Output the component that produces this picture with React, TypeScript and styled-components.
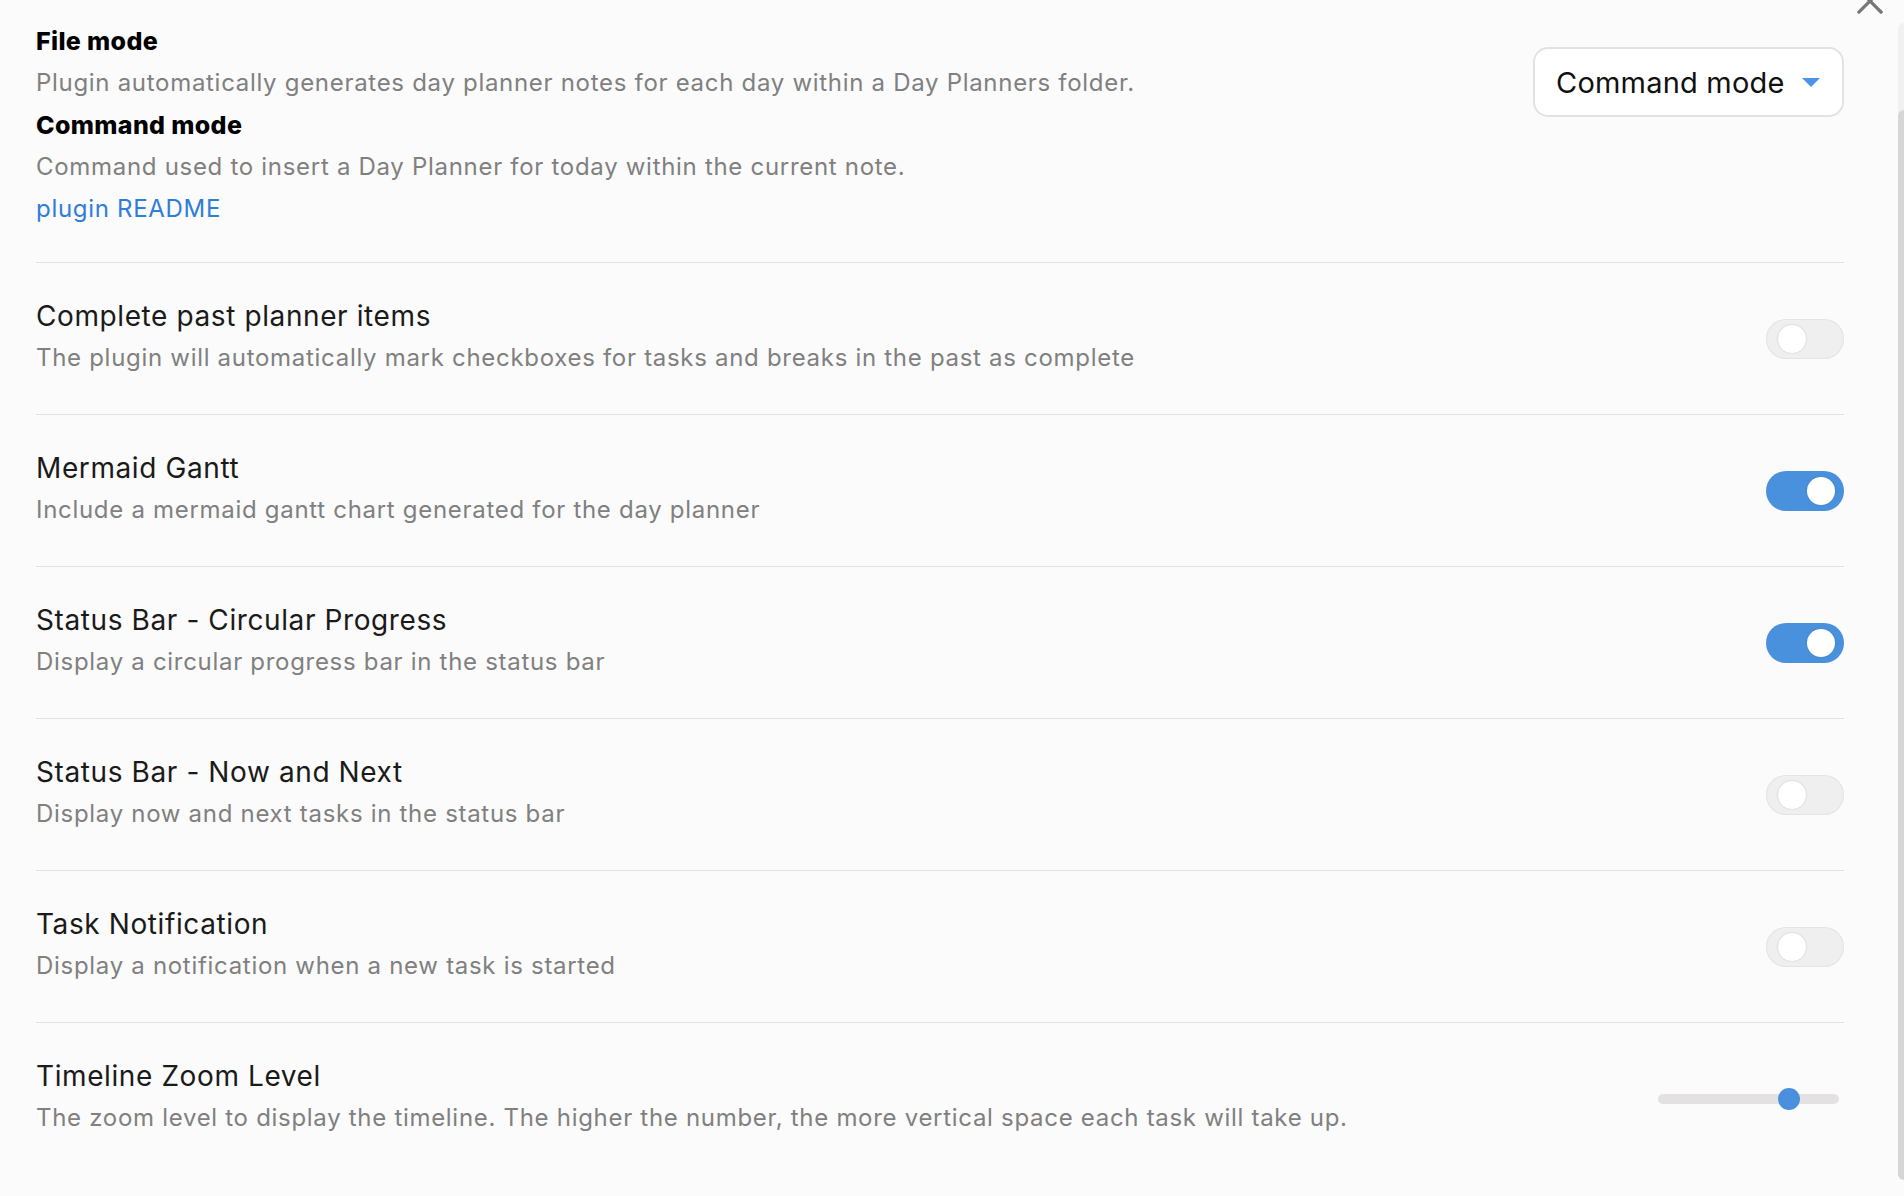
import React, { useState } from "react";
import styled, { createGlobalStyle } from "styled-components";

const Global = createGlobalStyle`
  html, body { margin: 0; padding: 0; background: #fbfbfb; }
  body { font-family: Inter, "Noto Sans", "Liberation Sans", sans-serif; overflow: hidden; }
  * { box-sizing: border-box; }
`;

const Page = styled.div`
  position: relative;
  width: 1904px;
  height: 1196px;
  background: #fbfbfb;
  overflow: hidden;
`;

const Content = styled.div`
  padding: 20px 60px 0 36px;
  display: flex;
  flex-direction: column;
`;

const TopItem = styled.div`
  display: flex;
  justify-content: space-between;
  align-items: flex-start;
  padding-bottom: 32px;
`;

const Info = styled.div`
  display: flex;
  flex-direction: column;
`;

const Heading = styled.div`
  font-size: 25px;
  font-weight: 800;
  letter-spacing: 0.35px;
  color: #000;
  line-height: 42px;
`;

const Desc = styled.div`
  font-size: 24px;
  letter-spacing: 0.7px;
  color: #808080;
  line-height: 42px;
`;

const Link = styled.a`
  font-size: 24px;
  letter-spacing: 0.7px;
  color: #2e7ddb;
  line-height: 42px;
  text-decoration: none;
`;

const Dropdown = styled.div`
  margin-top: 27px;
  width: 311px;
  height: 70px;
  border: 2px solid #e2e2e2;
  border-radius: 15px;
  background: #fff;
  display: flex;
  align-items: center;
  justify-content: space-between;
  padding: 0 22px 0 21px;
  font-size: 29px;
  letter-spacing: 0.2px;
  color: #111;
`;

const Caret = styled.span`
  width: 0;
  height: 0;
  border-left: 9px solid transparent;
  border-right: 9px solid transparent;
  border-top: 9px solid #4a93e6;
`;

const Row = styled.div`
  display: flex;
  justify-content: space-between;
  align-items: center;
  border-top: 1px solid #e1e1e1;
  padding: 35px 0 34px;
`;

const Title = styled.div`
  font-size: 28px;
  letter-spacing: 0.6px;
  color: #1a1a1a;
  line-height: 36px;
`;

const RowDesc = styled.div`
  margin-top: 2px;
  font-size: 24px;
  letter-spacing: 0.7px;
  color: #808080;
  line-height: 44px;
`;

const Toggle = styled.button<{ $on: boolean }>`
  position: relative;
  flex: none;
  width: 78px;
  height: 40px;
  border-radius: 20px;
  border: none;
  padding: 0;
  cursor: pointer;
  background: ${(p) => (p.$on ? "#4a91dd" : "#efefef")};
  box-shadow: ${(p) => (p.$on ? "none" : "inset 0 0 0 1px #e4e4e4")};
`;

const Knob = styled.span<{ $on: boolean }>`
  position: absolute;
  top: 6px;
  left: ${(p) => (p.$on ? "41px" : "12px")};
  width: 28px;
  height: 28px;
  border-radius: 50%;
  background: #fff;
  box-shadow: 0 0 2px rgba(0, 0, 0, 0.18);
`;

const SliderWrap = styled.div`
  position: relative;
  flex: none;
  width: 181px;
  height: 24px;
  display: flex;
  align-items: center;
  margin-right: 5px;
`;

const SliderTrack = styled.div`
  width: 100%;
  height: 10px;
  border-radius: 5px;
  background: #e3e1e2;
`;

const SliderThumb = styled.div`
  position: absolute;
  top: 1px;
  width: 22px;
  height: 22px;
  border-radius: 50%;
  background: #4a90dd;
  transform: translateX(-50%);
`;

const Close = styled.div`
  position: absolute;
  top: -12px;
  left: 1857px;
  width: 26px;
  height: 26px;
`;

const Scrollbar = styled.div`
  position: absolute;
  left: 1898px;
  top: 23px;
  width: 12px;
  height: 1157px;
  border-radius: 6px;
  background: #f1f1f1;
  display: flex;
  flex-direction: column;
  justify-content: flex-end;
`;

const ScrollThumb = styled.div`
  height: 1070px;
  border-radius: 6px;
  background: #d6d6d6;
`;

type Item = { title: string; desc: string; kind: "toggle" | "slider"; on?: boolean; value?: number };

const items: Item[] = [
  { title: "Complete past planner items", desc: "The plugin will automatically mark checkboxes for tasks and breaks in the past as complete", kind: "toggle", on: false },
  { title: "Mermaid Gantt", desc: "Include a mermaid gantt chart generated for the day planner", kind: "toggle", on: true },
  { title: "Status Bar - Circular Progress", desc: "Display a circular progress bar in the status bar", kind: "toggle", on: true },
  { title: "Status Bar - Now and Next", desc: "Display now and next tasks in the status bar", kind: "toggle", on: false },
  { title: "Task Notification", desc: "Display a notification when a new task is started", kind: "toggle", on: false },
  { title: "Timeline Zoom Level", desc: "The zoom level to display the timeline. The higher the number, the more vertical space each task will take up.", kind: "slider", value: 0.724 },
];

function SettingToggle({ initial }: { initial: boolean }) {
  const [on, setOn] = useState(initial);
  return (
    <Toggle $on={on} onClick={() => setOn(!on)} aria-pressed={on}>
      <Knob $on={on} />
    </Toggle>
  );
}

export default function App() {
  return (
    <Page>
      <Global />
      <Close>
        <svg width="26" height="26" viewBox="0 0 26 26">
          <path d="M2 2 L24 24 M24 2 L2 24" stroke="#777" strokeWidth="3.2" strokeLinecap="square" fill="none" />
        </svg>
      </Close>
      <Scrollbar>
        <ScrollThumb />
      </Scrollbar>
      <Content>
        <TopItem>
          <Info>
            <Heading>File mode</Heading>
            <Desc>Plugin automatically generates day planner notes for each day within a Day Planners folder.</Desc>
            <Heading>Command mode</Heading>
            <Desc>Command used to insert a Day Planner for today within the current note.</Desc>
            <Link href="#">plugin README</Link>
          </Info>
          <Dropdown>
            <span>Command mode</span>
            <Caret />
          </Dropdown>
        </TopItem>
        {items.map((it) => (
          <Row key={it.title}>
            <Info>
              <Title>{it.title}</Title>
              <RowDesc>{it.desc}</RowDesc>
            </Info>
            {it.kind === "toggle" ? (
              <SettingToggle initial={!!it.on} />
            ) : (
              <SliderWrap>
                <SliderTrack />
                <SliderThumb style={{ left: `${(it.value ?? 0) * 100}%` }} />
              </SliderWrap>
            )}
          </Row>
        ))}
      </Content>
    </Page>
  );
}
